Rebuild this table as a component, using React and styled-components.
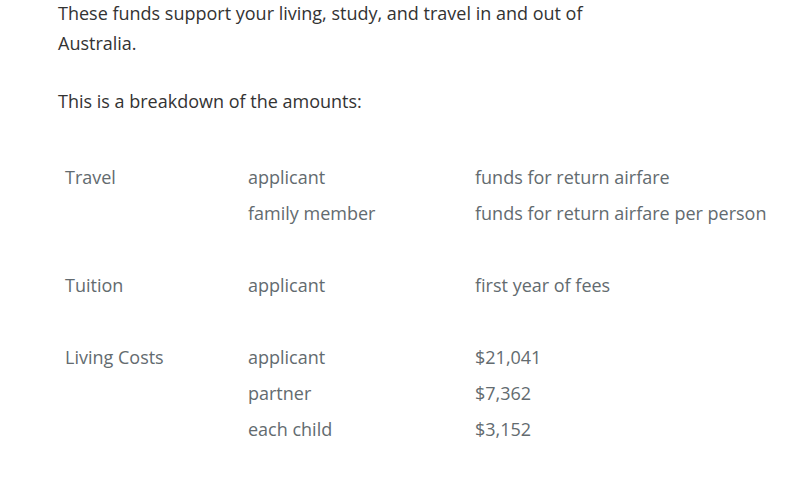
import React from "react";
import styled, { createGlobalStyle } from "styled-components";

const Global = createGlobalStyle`
  html, body { margin: 0; padding: 0; background: #fff; }
  body { font-family: "Open Sans", "Noto Sans", sans-serif; }
`;

const Page = styled.div`
  padding: 0 0 0 58px;
  margin-top: -2px;
`;

const Para = styled.p`
  margin: 0 0 28px;
  max-width: 560px;
  font-size: 18px;
  line-height: 30px;
  color: #333;
`;

const Table = styled.div`
  margin-top: 43px;
  display: grid;
  grid-template-columns: 183px 227px auto;
  padding-left: 7px;
`;

const Cell = styled.div`
  height: 36px;
  line-height: 36px;
  font-size: 18px;
  color: #636b6f;
  white-space: nowrap;
`;

const rows = [
  ["Travel", "applicant", "funds for return airfare"],
  ["", "family member", "funds for return airfare per person"],
  ["", "", ""],
  ["Tuition", "applicant", "first year of fees"],
  ["", "", ""],
  ["Living Costs", "applicant", "$21,041"],
  ["", "partner", "$7,362"],
  ["", "each child", "$3,152"],
];

export default function App() {
  return (
    <Page>
      <Global />
      <Para>
        These funds support your living, study, and travel in and out of Australia.
      </Para>
      <Para>This is a breakdown of the amounts:</Para>
      <Table>
        {rows.map((r, i) =>
          r.map((c, j) => <Cell key={`${i}-${j}`}>{c}</Cell>)
        )}
      </Table>
    </Page>
  );
}
